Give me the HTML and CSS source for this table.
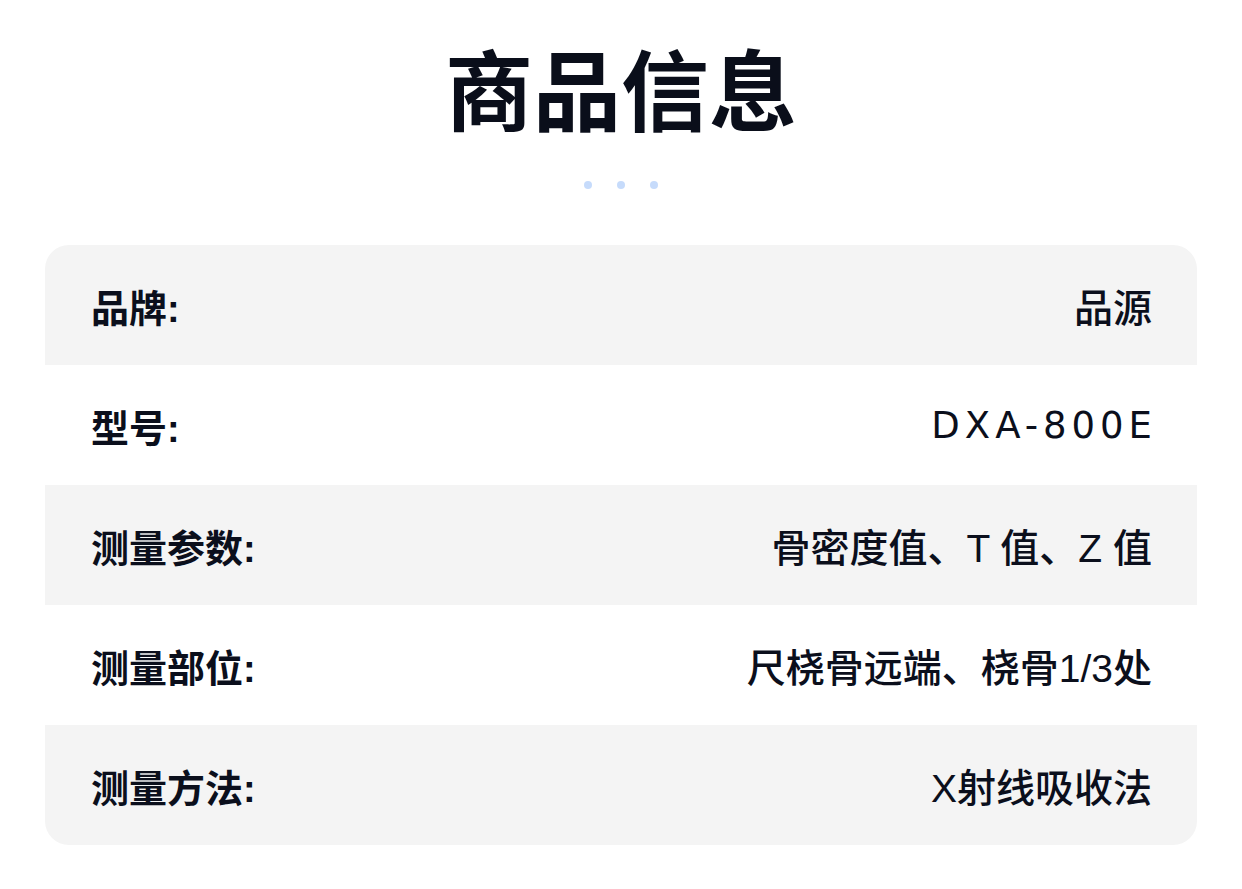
FILE: index.html
```html
<!DOCTYPE html>
<html lang="zh-CN">
<head>
<meta charset="utf-8">
<title>商品信息</title>
<link rel="stylesheet" href="styles.css">
</head>
<body>
<div class="page">
  <h1 class="title">商品信息</h1>
  <div class="dots"><span></span><span></span><span></span></div>
  <div class="card">
    <div class="row"><span class="label">品牌:</span><span class="value">品源</span></div>
    <div class="row"><span class="label">型号:</span><span class="value latin">DXA-800E</span></div>
    <div class="row"><span class="label">测量参数:</span><span class="value">骨密度值、T 值、Z 值</span></div>
    <div class="row"><span class="label">测量部位:</span><span class="value">尺桡骨远端、桡骨1/3处</span></div>
    <div class="row"><span class="label">测量方法:</span><span class="value">X射线吸收法</span></div>
  </div>
</div>
</body>
</html>
```

FILE: styles.css
```css
html, body {
  margin: 0;
  padding: 0;
  background: #ffffff;
}
body {
  font-family: "Liberation Sans", "Noto Sans CJK SC", sans-serif;
  color: #0b0f1c;
}
.page {
  width: 1152px;
  margin: 0 auto;
  padding-top: 44px;
  display: flex;
  flex-direction: column;
  align-items: center;
}
.title {
  margin: 0;
  font-size: 88px;
  line-height: 100px;
  font-weight: 700;
  color: #0a0e1a;
}
.dots {
  display: flex;
  gap: 25px;
  margin-top: 37px;
  height: 8px;
}
.dots span {
  width: 8px;
  height: 8px;
  border-radius: 50%;
  background: #c6dbfb;
}
.card {
  margin-top: 56px;
  width: 100%;
  border-radius: 24px;
  overflow: hidden;
  display: flex;
  flex-direction: column;
}
.row {
  height: 120px;
  padding: 0 45px 0 46px;
  display: flex;
  align-items: center;
  justify-content: space-between;
  font-size: 38px;
  background: #ffffff;
}
.row:nth-child(odd) {
  background: #f4f4f4;
}
.label {
  font-weight: 700;
}
.value {
  font-size: 39px;
  font-weight: 500;
}
.value.latin {
  font-family: "DejaVu Sans", sans-serif;
  font-size: 37px;
  font-weight: 400;
  letter-spacing: 5px;
  margin-right: -5px;
}
```
